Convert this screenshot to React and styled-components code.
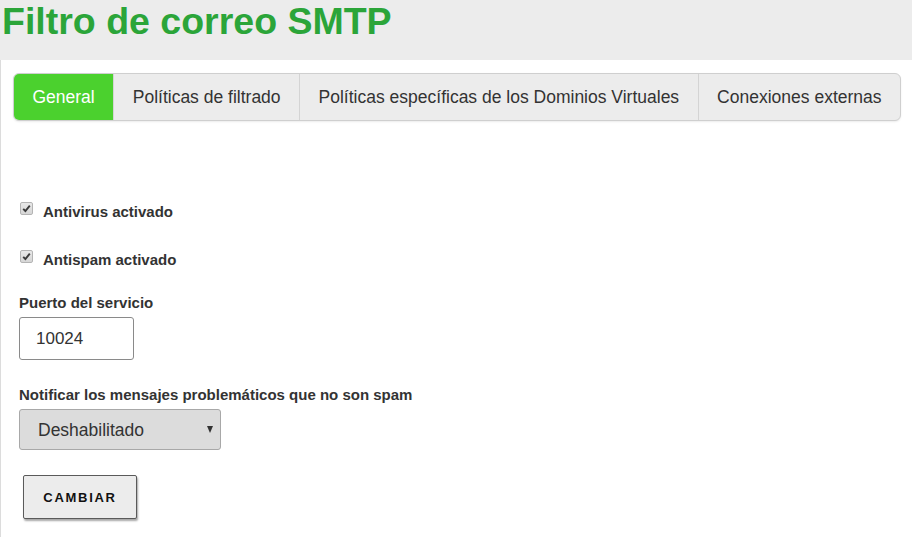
import React, { useState } from 'react';
import styled, { createGlobalStyle } from 'styled-components';

const GlobalStyle = createGlobalStyle`
  body {
    margin: 0;
    background: #fff;
    font-family: "Liberation Sans", Arial, sans-serif;
    color: #333;
  }
`;

const Header = styled.div`
  height: 60px;
  background: #ececec;
`;

const Title = styled.h1`
  margin: 0;
  padding-left: 2px;
  font-size: 37.5px;
  line-height: 42px;
  font-weight: bold;
  color: #2ba539;
`;

const Content = styled.div`
  border-left: 1px solid #dcdcdc;
  padding: 13px 11px 18px 12px;
  min-height: 460px;
  box-sizing: border-box;
`;

const Tabs = styled.div`
  display: flex;
  border: 1px solid #cfcfcf;
  border-radius: 6px;
  background: #ececec;
  overflow: hidden;
  box-shadow: 0 1px 2px rgba(0, 0, 0, 0.08);
`;

const Tab = styled.div`
  flex: 1 1 auto;
  text-align: center;
  padding: 0 18px;
  height: 46px;
  line-height: 46px;
  font-size: 17.5px;
  white-space: nowrap;
  color: ${(p) => (p.$active ? '#fff' : '#333')};
  background: ${(p) => (p.$active ? '#4bd12e' : 'transparent')};
  border-right: 1px solid #d4d4d4;
  &:last-child {
    border-right: none;
  }
`;

const Form = styled.form`
  display: flex;
  flex-direction: column;
  align-items: flex-start;
  padding-left: 6px;
`;

const CheckRow = styled.label`
  display: flex;
  align-items: flex-start;
  gap: 10px;
  height: 18px;
  margin-top: ${(p) => p.$top}px;
  font-size: 15px;
  line-height: 18px;
  font-weight: bold;
  color: #333;
  cursor: pointer;
`;

const Box = styled.span`
  display: inline-flex;
  align-items: center;
  justify-content: center;
  width: 11px;
  height: 11px;
  margin-top: -1px;
  margin-left: 1px;
  border: 1px solid #b4b4b4;
  border-radius: 2px;
  background: linear-gradient(#e8e8e8, #d6d6d6);
`;

const FieldLabel = styled.label`
  display: block;
  margin-top: ${(p) => p.$top}px;
  margin-bottom: 5px;
  font-size: 15px;
  line-height: 18px;
  font-weight: bold;
  color: #333;
`;

const TextInput = styled.input`
  box-sizing: border-box;
  width: 115px;
  height: 43px;
  padding: 0 16px;
  border: 1px solid #8a8a8a;
  border-radius: 3px;
  font-family: inherit;
  font-size: 17px;
  color: #333;
  outline: none;
`;

const SelectWrap = styled.div`
  position: relative;
  width: 202px;
  height: 41px;
`;

const Select = styled.select`
  appearance: none;
  box-sizing: border-box;
  width: 100%;
  height: 100%;
  padding: 0 18px;
  border: 1px solid #a8a8a8;
  border-radius: 3px;
  background: #dcdcdc;
  font-family: inherit;
  font-size: 17.5px;
  color: #333;
  outline: none;
`;

const Arrow = styled.span`
  position: absolute;
  right: 8px;
  top: 17px;
  width: 0;
  height: 0;
  border-left: 3.5px solid transparent;
  border-right: 3.5px solid transparent;
  border-top: 7px solid #333;
  pointer-events: none;
`;

const SubmitButton = styled.button`
  margin-top: 25px;
  margin-left: 4px;
  box-sizing: border-box;
  width: 114px;
  height: 44px;
  border: 1px solid #5a5a5a;
  border-radius: 2px;
  background: #ececec;
  box-shadow: 1px 2px 2px rgba(0, 0, 0, 0.35);
  font-family: inherit;
  font-size: 13px;
  font-weight: bold;
  letter-spacing: 1.7px;
  color: #111;
  cursor: pointer;
`;

const Check = () => (
  <svg width="9" height="9" viewBox="0 0 9 9">
    <path d="M1.2 4.8 L3.4 7 L7.8 1.6" fill="none" stroke="#3a3a3a" strokeWidth="1.9" />
  </svg>
);

const tabs = [
  'General',
  'Políticas de filtrado',
  'Políticas específicas de los Dominios Virtuales',
  'Conexiones externas',
];

const App = () => {
  const [port, setPort] = useState('10024');
  const [notify, setNotify] = useState('disabled');

  return (
    <>
      <GlobalStyle />
      <Header>
        <Title>Filtro de correo SMTP</Title>
      </Header>
      <Content>
        <Tabs>
          {tabs.map((t, i) => (
            <Tab key={t} $active={i === 0}>{t}</Tab>
          ))}
        </Tabs>
        <Form onSubmit={(e) => e.preventDefault()}>
          <CheckRow $top={82}>
            <Box><Check /></Box>
            Antivirus activado
          </CheckRow>
          <CheckRow $top={30}>
            <Box><Check /></Box>
            Antispam activado
          </CheckRow>
          <FieldLabel htmlFor="port" $top={25}>Puerto del servicio</FieldLabel>
          <TextInput id="port" value={port} onChange={(e) => setPort(e.target.value)} />
          <FieldLabel htmlFor="notify" $top={26}>Notificar los mensajes problemáticos que no son spam</FieldLabel>
          <SelectWrap>
            <Select id="notify" value={notify} onChange={(e) => setNotify(e.target.value)}>
              <option value="disabled">Deshabilitado</option>
            </Select>
            <Arrow />
          </SelectWrap>
          <SubmitButton type="submit">CAMBIAR</SubmitButton>
        </Form>
      </Content>
    </>
  );
};

export default App;
